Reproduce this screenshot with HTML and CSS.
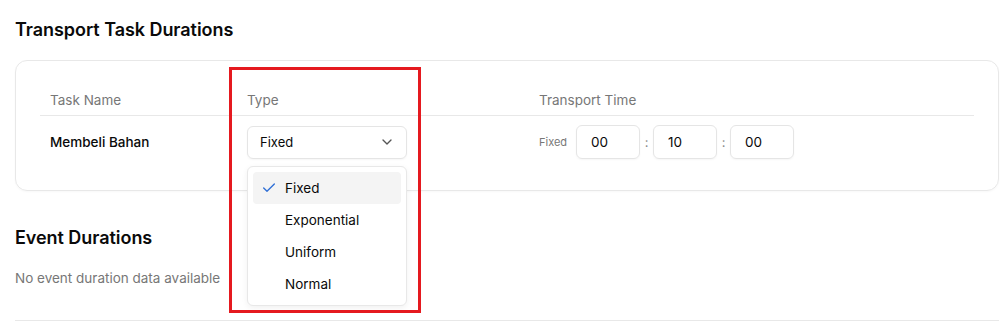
FILE: index.html
```html
<!DOCTYPE html>
<html>
<head>
<meta charset="utf-8">
<link rel="stylesheet" href="styles.css">
</head>
<body>
<div class="page">
  <h2 class="title">Transport Task Durations</h2>
  <div class="card">
    <div class="row head">
      <div class="cell">Task Name</div>
      <div class="cell">Type</div>
      <div class="cell">Transport Time</div>
    </div>
    <div class="row body">
      <div class="cell name">Membeli Bahan</div>
      <div class="cell">
        <div class="select-wrap">
          <div class="select">
            <span>Fixed</span>
            <svg class="chev" width="16" height="16" viewBox="0 0 24 24" fill="none" stroke="#555" stroke-width="2" stroke-linecap="round" stroke-linejoin="round"><path d="m6 9 6 6 6-6"/></svg>
          </div>
          <div class="menu">
            <div class="item active">
              <svg class="check" width="16" height="16" viewBox="0 0 24 24" fill="none" stroke="#2f6fd6" stroke-width="2" stroke-linecap="round" stroke-linejoin="round"><path d="M20 6 9 17l-5-5"/></svg>
              <span>Fixed</span>
            </div>
            <div class="item"><span>Exponential</span></div>
            <div class="item"><span>Uniform</span></div>
            <div class="item"><span>Normal</span></div>
          </div>
        </div>
      </div>
      <div class="cell time">
        <span class="tlabel">Fixed</span>
        <div class="tbox">00</div>
        <span class="colon">:</span>
        <div class="tbox">10</div>
        <span class="colon">:</span>
        <div class="tbox">00</div>
      </div>
    </div>
  </div>
  <h2 class="title second">Event Durations</h2>
  <p class="empty">No event duration data available</p>
  <div class="rule"></div>
</div>
<div class="highlight"></div>
</body>
</html>
```
FILE: styles.css
```css
* { box-sizing: border-box; }
html, body { margin: 0; padding: 0; background: #fff; }
body {
  font-family: Inter, "Noto Sans", sans-serif;
  color: #0a0a0a;
  position: relative;
  width: 1004px;
  height: 324px;
  overflow: hidden;
}
.page { padding: 18px 5px 0 15px; }
.title {
  margin: 0;
  font-size: 18px;
  line-height: 24px;
  font-weight: 600;
  letter-spacing: -0.05px;
}
.card {
  margin-top: 18px;
  border: 1px solid #e8e8e8;
  border-radius: 12px;
  padding: 23px 24px 22px;
  box-shadow: 0 1px 2px rgba(0,0,0,0.03);
}
.row {
  display: grid;
  grid-template-columns: 197px 292px 1fr;
  align-items: center;
}
.row.head {
  height: 32px;
  border-bottom: 1px solid #e8e8e8;
  font-size: 13.5px;
  color: #777;
}
.row.body { height: 52px; font-size: 13.5px; }
.cell { padding-left: 10px; }
.name { font-weight: 500; }
.select-wrap { position: relative; width: 160px; }
.select {
  height: 33px;
  border: 1px solid #e5e5e5;
  border-radius: 6px;
  display: flex;
  align-items: center;
  justify-content: space-between;
  padding: 0 11px 0 12px;
  font-size: 13px;
  box-shadow: 0 1px 2px rgba(0,0,0,0.04);
}
.chev { display: block; }
.menu {
  position: absolute;
  top: 40px;
  left: 0;
  width: 160px;
  height: 140px;
  background: #fff;
  border: 1px solid #e8e8e8;
  border-radius: 6px;
  padding: 5px;
  box-shadow: 0 2px 6px rgba(0,0,0,0.06);
  z-index: 5;
}
.item {
  height: 32px;
  display: flex;
  align-items: center;
  padding-left: 32px;
  position: relative;
  font-size: 13.5px;
  border-radius: 4px;
}
.item.active { background: #f4f4f4; }
.check { position: absolute; left: 8px; top: 8px; }
.time { display: flex; align-items: center; }
.tlabel { font-size: 11px; color: #777; margin-right: 9px; }
.tbox {
  width: 64px;
  height: 34px;
  border: 1px solid #e5e5e5;
  border-radius: 6px;
  display: flex;
  align-items: center;
  padding-left: 14px;
  font-size: 13.5px;
  box-shadow: 0 1px 2px rgba(0,0,0,0.04);
}
.colon { width: 13px; text-align: center; color: #888; font-size: 13px; }
.second { margin-top: 35px; }
.empty {
  margin: 18px 0 0;
  font-size: 13.5px;
  line-height: 20px;
  color: #777;
}
.rule { margin-top: 32px; height: 1px; background: #e8e8e8; }
.highlight {
  position: absolute;
  left: 229px;
  top: 67px;
  width: 192px;
  height: 246px;
  border: 3px solid #e5191f;
  z-index: 10;
}
```
